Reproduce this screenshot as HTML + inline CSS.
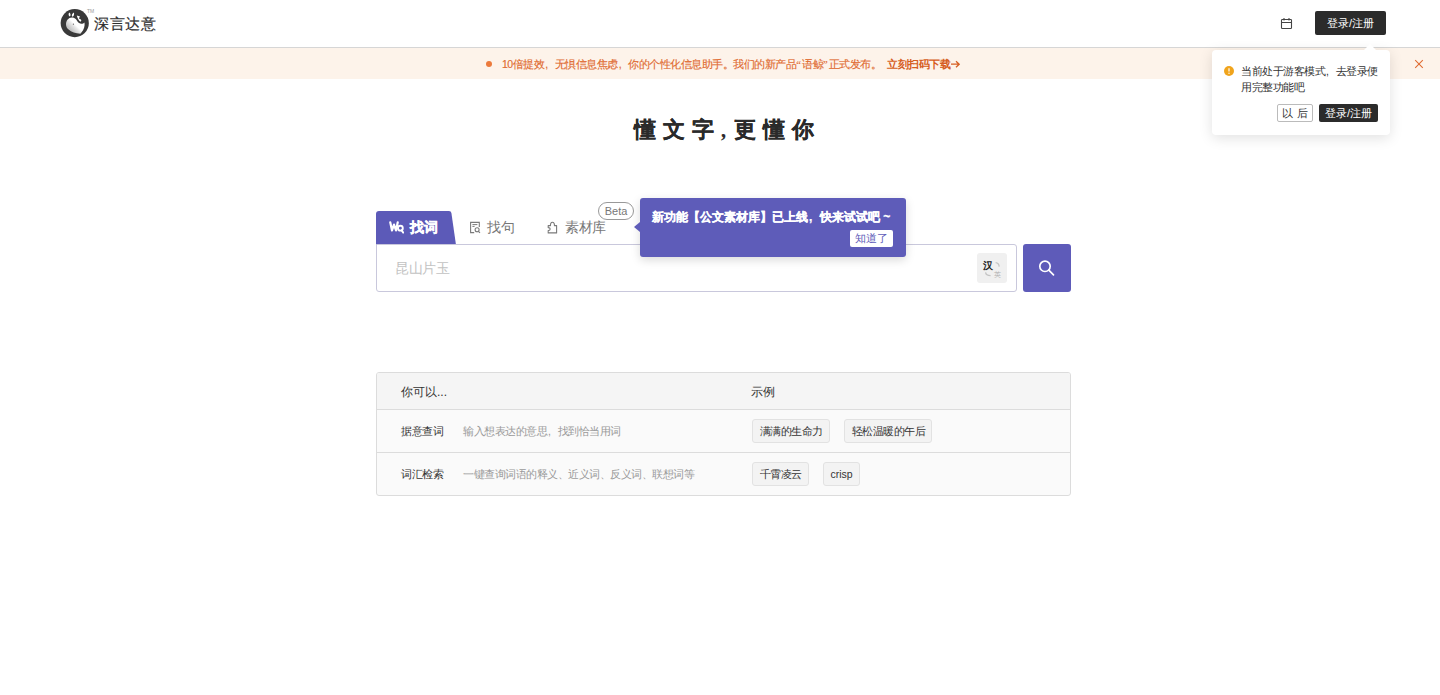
<!DOCTYPE html>
<html><head><meta charset="utf-8">
<style>
*{box-sizing:border-box;margin:0;padding:0}
html,body{width:1440px;height:695px;overflow:hidden;background:#fff;font-family:"Liberation Sans",sans-serif;color:#333}
.abs{position:absolute}
#hdr{position:absolute;left:0;top:0;width:1440px;height:48px;background:#fff;border-bottom:1px solid #d6d6d6}
#logo{left:60px;top:8px;width:30px;height:30px}
#brand{left:94px;top:13px;font-size:15px;letter-spacing:0.5px;line-height:21px;color:#2e2e2e;-webkit-text-stroke:0.2px #2e2e2e;white-space:nowrap}
#tm{left:87px;top:8px;font-size:5px;color:#999}
#cal{left:1280px;top:17px;width:13px;height:13px}
#login{left:1315px;top:11px;width:71px;height:24px;background:#2b2b2b;border-radius:2px;color:#fff;font-size:11px;line-height:24px;text-align:center;white-space:nowrap}
#banner{left:0;top:48px;width:1440px;height:31px;background:#fdf3ea}
#dot{left:486px;top:61px;width:6px;height:6px;border-radius:50%;background:#ec7a3c}
#btxt{left:502px;top:56px;font-size:10.5px;letter-spacing:-0.5px;line-height:16px;color:#e06a30;-webkit-text-stroke:0.15px #e06a30;white-space:nowrap}
#blink{left:887px;top:56px;font-size:10.5px;letter-spacing:-0.5px;line-height:16px;color:#d65d22;font-weight:bold;white-space:nowrap}
#bx{left:1414px;top:58.5px;width:10px;height:10px}
#pop{left:1212px;top:50px;width:178px;height:85px;background:#fff;border-radius:4px;box-shadow:0 3px 14px rgba(0,0,0,.12)}
#parrow{left:1364px;top:44px;width:0;height:0;border-left:6px solid transparent;border-right:6px solid transparent;border-bottom:6px solid #fff}
#warn{left:1224px;top:66px;width:10px;height:10px;border-radius:50%;background:#f0a41c}
#ptxt{left:1241px;top:63px;white-space:nowrap;font-size:10.5px;letter-spacing:-0.5px;line-height:16px;color:#333}
#later{left:1277px;top:104px;width:36px;height:18px;border:1px solid #bbb;border-radius:2px;font-size:11px;line-height:16px;text-align:center;color:#333;white-space:nowrap}
#plogin{left:1319px;top:104px;width:59px;height:18px;background:#2b2b2b;border-radius:2px;font-size:11px;line-height:18px;text-align:center;color:#fff;white-space:nowrap}
#title{left:634px;top:114px;font-size:22px;line-height:32px;letter-spacing:7px;font-weight:bold;color:#2a2a2a;-webkit-text-stroke:0.15px #2a2a2a;white-space:nowrap}
#tab1{left:376px;top:211px;width:80px;height:34px}
#tab1t{left:410px;top:219px;font-size:13.5px;letter-spacing:-0.5px;line-height:18px;color:#fff;font-weight:bold;-webkit-text-stroke:0.35px #fff;white-space:nowrap}
#tab2t{left:487px;top:219px;font-size:13.5px;letter-spacing:-0.5px;line-height:18px;color:#777;white-space:nowrap}
#tab3t{left:565px;top:219px;font-size:13.5px;letter-spacing:-0.5px;line-height:18px;color:#777;white-space:nowrap}
#beta{left:598px;top:202px;width:36px;height:18px;border:1px solid #999;border-radius:9px;font-size:11px;line-height:16px;text-align:center;color:#777}
#input{left:376px;top:244px;width:641px;height:48px;border:1px solid #c9c8dc;border-radius:0 3px 3px 3px;background:#fff}
#ph{left:395px;top:260px;font-size:13.5px;letter-spacing:-0.5px;line-height:18px;color:#c2c2c2;white-space:nowrap}
#trans{left:977px;top:253px;width:30px;height:30px;background:#f0f0f0;border-radius:3px}
#sbtn{left:1023px;top:244px;width:48px;height:48px;background:#5e5bb9;border-radius:3px}
#tip{left:640px;top:198px;width:266px;height:59px;background:#5e5cb9;border-radius:3px;box-shadow:0 3px 10px rgba(0,0,0,.15)}
#tiparrow{left:634px;top:222px;width:0;height:0;border-top:5px solid transparent;border-bottom:5px solid transparent;border-right:6px solid #5e5cb9}
#tiptxt{left:652px;top:209px;font-size:12px;line-height:16px;color:#fff;font-weight:bold;-webkit-text-stroke:0.25px #fff;white-space:nowrap}
#know{left:850px;top:230px;width:43px;height:17px;background:#fff;border-radius:2px;color:#5e5cb9;font-size:11px;line-height:17px;text-align:center;white-space:nowrap}
#tbl{left:376px;top:372px;width:695px;height:124px;border:1px solid #dcdcdc;border-radius:3px;background:#fafafa;overflow:hidden}
#th{left:0;top:0;width:693px;height:37px;background:#f5f5f5;border-bottom:1px solid #dcdcdc}
#r1{left:0;top:37px;width:693px;height:43px;border-bottom:1px solid #dcdcdc}
.tx{font-size:12px;line-height:16px;white-space:nowrap}
.k{font-size:10.5px;letter-spacing:-0.5px;line-height:14px;color:#333;white-space:nowrap}
.d{font-size:10.5px;letter-spacing:-0.5px;line-height:14px;color:#999;white-space:nowrap}
.tag{position:absolute;height:24px;border:1px solid #e2e2e2;background:#f3f3f3;border-radius:3px;font-size:10.5px;letter-spacing:-0.5px;line-height:22px;color:#333;padding:0 6px 0 6.5px;white-space:nowrap}
.q{font-family:"Liberation Serif",serif;letter-spacing:1.2px}
.cm{display:inline-block;width:10.5px;padding-left:1px;letter-spacing:0}
</style></head><body>
<div id="hdr"></div>
<svg id="logo" class="abs" viewBox="0 0 30 30">
 <defs><linearGradient id="wg" gradientUnits="userSpaceOnUse" x1="15.5" y1="16.5" x2="10.5" y2="21.5"><stop offset="0" stop-color="#fff"/><stop offset="0.35" stop-color="#e6e6e6"/><stop offset="1" stop-color="#c4c4c4"/></linearGradient></defs>
 <circle cx="14.75" cy="15.1" r="14.1" fill="#393939"/>
 <path d="M6 16.5 C6 12.5 8.5 9.6 12 9.6 C14.5 9.6 16 11 17.2 13 C18.2 14.8 19.8 15.8 21.4 15.8 C22.8 15.8 23.8 15.2 24.5 14.4 C25 18 24 21.6 21.4 24.4 L20.4 25.8 C15.5 25.4 11.5 24.4 8.6 21.6 C6.9 20 6 18.4 6 16.5 Z" fill="url(#wg)"/>
 <path d="M16.8 7.4 C18 7.6 19.2 8 20 8.6 L18.8 10.6 C19.8 10.9 20.8 11.4 21.4 12.2 L20.6 13.8 C19 13 17.6 10.6 16.8 7.4 Z" fill="#fff"/>
 <path d="M9.3 4.4 C8.2 5.6 8.4 7.8 9.8 8.6 C10.9 7.8 10.9 5.6 9.3 4.4 Z M13.8 4.4 C12 5.4 11.4 7.4 12.2 8.8 C13.8 8.2 14.6 6.2 13.8 4.4 Z" fill="#fff"/>
 <circle cx="13.4" cy="16.2" r=".6" fill="#666"/>
</svg>
<div id="tm" class="abs">TM</div>
<div id="brand" class="abs">深言达意</div>
<svg id="cal" class="abs" viewBox="0 0 13 13"><rect x="1.5" y="2.5" width="10" height="9" rx="0.8" fill="none" stroke="#444" stroke-width="1.1"/><path d="M1.5 5.5H11.5M4 1v2.5M9 1v2.5" stroke="#444" stroke-width="1.1"/></svg>
<div id="login" class="abs">登录/注册</div>

<div id="banner" class="abs"></div>
<div id="dot" class="abs"></div>
<div id="btxt" class="abs">10倍提效<span class="cm">,</span>无惧信息焦虑<span class="cm">,</span>你的个性化信息助手。我们的新产品<span class="q">“</span>语鲸<span class="q">”</span>正式发布。</div>
<div id="blink" class="abs">立刻扫码下载</div>
<svg class="abs" style="left:950px;top:59px" width="11" height="10" viewBox="0 0 11 10"><path d="M1 5.2H9M6 2.2L9.2 5.2L6 8.2" fill="none" stroke="#d65d22" stroke-width="1.3"/></svg>
<svg id="bx" class="abs" viewBox="0 0 10 10"><path d="M1.2 1.2L8.8 8.8M8.8 1.2L1.2 8.8" stroke="#e06a30" stroke-width="1.05"/></svg>

<div id="pop" class="abs"></div>
<div id="parrow" class="abs"></div>
<div id="warn" class="abs"><svg width="10" height="10" viewBox="0 0 10 10" style="display:block"><path d="M5 2.3V5.6" stroke="#fff" stroke-width="1.2"/><circle cx="5" cy="7.3" r=".7" fill="#fff"/></svg></div>
<div id="ptxt" class="abs">当前处于游客模式<span class="cm">,</span>去登录便<br>用完整功能吧</div>
<div id="later" class="abs">以 后</div>
<div id="plogin" class="abs">登录/注册</div>

<div id="title" class="abs">懂文字<span style="font-family:'Liberation Serif',serif;font-size:20px;letter-spacing:7.5px">,</span>更懂你</div>

<svg id="tab1" class="abs" viewBox="0 0 80 34" preserveAspectRatio="none"><path d="M0 34V3Q0 0 3 0H73Q75 0 75.4 2L80 34Z" fill="#5c5ab8"/></svg>
<svg class="abs" style="left:389px;top:221px" width="15" height="13" viewBox="0 0 15 13"><path d="M1.3 1.4 L3 9.4 L5 3.6 L7 9.4 L8.7 1.4" fill="none" stroke="#fff" stroke-width="2.2" stroke-linejoin="round" stroke-linecap="round"/><circle cx="11.4" cy="7.2" r="2.4" fill="none" stroke="#fff" stroke-width="1.9"/><path d="M12.6 9.2 L14.2 11.6" stroke="#fff" stroke-width="1.9" stroke-linecap="round"/></svg>
<div id="tab1t" class="abs">找词</div>
<svg class="abs" style="left:469px;top:221px" width="12" height="13" viewBox="0 0 12 13"><path d="M5.2 11.6 H1.6 V1.4 H10.3 V6" fill="none" stroke="#7a7a7a" stroke-width="1.1"/><path d="M3.4 3.6 H8.4 M3.4 5.4 H5.6" stroke="#7a7a7a" stroke-width="1"/><circle cx="8.1" cy="8.8" r="2" fill="none" stroke="#7a7a7a" stroke-width="1.1"/><path d="M9.5 10.3 L11 11.9" stroke="#7a7a7a" stroke-width="1.1"/></svg>
<div id="tab2t" class="abs">找句</div>
<svg class="abs" style="left:547px;top:221px" width="11" height="13" viewBox="0 0 11 13"><path d="M1.2 11.9 H9.6 V4.6 H7.4 C7.6 3 6.9 1.3 5.4 1.3 C4 1.3 3.3 3 3.5 4.6 H1.2 V6.6 C2.8 6.6 3.2 7.4 3.2 8.1 C3.2 8.8 2.8 9.6 1.2 9.6 Z" fill="none" stroke="#7a7a7a" stroke-width="1.1" stroke-linejoin="round"/></svg>
<div id="tab3t" class="abs">素材库</div>
<div id="beta" class="abs">Beta</div>

<div id="input" class="abs"></div>
<div id="ph" class="abs">昆山片玉</div>
<div id="trans" class="abs"></div>
<div class="abs" style="left:983px;top:259px;font-size:10px;line-height:14px;font-weight:bold;color:#222">汉</div>
<div class="abs" style="left:994px;top:270px;font-size:6.5px;line-height:9px;color:#b0b0b0">英</div>
<svg class="abs" style="left:977px;top:253px" width="29" height="29" viewBox="0 0 29 29"><path d="M18.6 9.6 C20.8 9.8 22 11.2 22.2 13.6" fill="none" stroke="#c4c4c4" stroke-width="1.3"/><path d="M8.6 19.4 C8.8 21.6 10 22.6 13.6 22.6" fill="none" stroke="#c4c4c4" stroke-width="1.3"/></svg>
<div id="sbtn" class="abs"><svg width="48" height="48" viewBox="0 0 48 48" style="display:block"><circle cx="22" cy="22.3" r="5.2" fill="none" stroke="#fff" stroke-width="1.7"/><path d="M25.8 26.2L30.5 30.8" stroke="#fff" stroke-width="1.7" stroke-linecap="round"/></svg></div>

<div id="tip" class="abs"></div>
<div id="tiparrow" class="abs"></div>
<div id="tiptxt" class="abs">新功能【公文素材库】已上线<span class="cm" style="width:12px;font-size:12px">,</span>快来试试吧 ~</div>
<div id="know" class="abs">知道了</div>

<div id="tbl" class="abs">
 <div id="th" class="abs"></div>
 <div id="r1" class="abs"></div>
 <div class="abs tx" style="left:24px;top:11px">你可以...</div>
 <div class="abs tx" style="left:374px;top:11px">示例</div>
 <div class="abs k" style="left:24px;top:51px">据意查词</div>
 <div class="abs d" style="left:86px;top:51px">输入想表达的意思<span class="cm">,</span>找到恰当用词</div>
 <div class="tag" style="left:375px;top:46px">满满的生命力</div>
 <div class="tag" style="left:467px;top:46px">轻松温暖的午后</div>
 <div class="abs k" style="left:24px;top:94px">词汇检索</div>
 <div class="abs d" style="left:86px;top:94px">一键查询词语的释义、近义词、反义词、联想词等</div>
 <div class="tag" style="left:375px;top:89px">千霄凌云</div>
 <div class="tag" style="left:446px;top:89px;letter-spacing:0;padding:0 6.5px">crisp</div>
</div>
</body></html>
